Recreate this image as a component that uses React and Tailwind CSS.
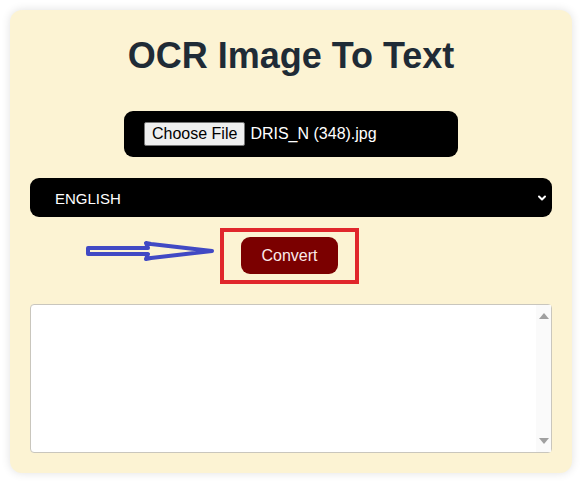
import { ChevronDown } from 'lucide-react';

export default function App() {
    return (
        <div className="bg-white p-[10px] h-[482px] font-['Liberation_Sans',Arial,sans-serif]">
            <div className="relative bg-[#fcf3d3] rounded-[12px] shadow-[0_0_10px_rgba(0,0,0,0.12)] px-[20px] pt-[26px] pb-[20px] flex flex-col">
                {/* title */}
                <h1 className="text-center text-[36px] leading-[40px] font-bold text-[#1f2b36]">
                    OCR Image To Text
                </h1>

                {/* file picker */}
                <div className="mt-[35px] self-center w-[334px] h-[46px] bg-black rounded-[9px] flex items-center pl-[20px]">
                    <span className="h-[24px] px-[7px] flex items-center bg-[#efefef] border border-[#767676] rounded-[2px] text-[16px] text-black">
                        Choose File
                    </span>
                    <span className="ml-[5px] text-[16px] text-white">DRIS_N (348).jpg</span>
                </div>

                {/* language select */}
                <div className="mt-[21px] h-[39px] bg-black rounded-[9px] flex items-center justify-between pl-[25px] pr-[4px]">
                    <span className="pt-[4px] text-[15px] text-white">ENGLISH</span>
                    <ChevronDown size={12} strokeWidth={4} className="text-white" />
                </div>

                {/* convert */}
                <div className="relative mt-[11px] flex justify-center pr-[3px]">
                    <div className="relative">
                        <svg className="absolute left-[-134px] top-[10px]" width="130" height="26" viewBox="0 0 130 26">
                            <path
                                d="M2 10 L62 10 L60 5 L65 6 L126 13 L65 20 L60 21 L62 16 L2 16 Z"
                                fill="none"
                                stroke="#4149c4"
                                strokeWidth="4"
                                strokeLinejoin="round"
                            />
                        </svg>
                        <div className="border-[4px] border-[#e0262b] px-[17px] pt-[5px] pb-[6px]">
                            <button className="w-[97px] h-[37px] bg-[#7b0000] rounded-[9px] text-[#fbeaea] text-[16px]">
                                Convert
                            </button>
                        </div>
                    </div>
                </div>

                {/* output */}
                <div className="mt-[20px] h-[149px] bg-white border border-[#c9c6bd] rounded-[4px] flex justify-end">
                    <div className="w-[15px] bg-[#fafafa] flex flex-col items-center justify-between py-[8px]">
                        <svg width="10" height="6" viewBox="0 0 10 6"><path d="M0 6 L5 0 L10 6 Z" fill="#a0a0a0" /></svg>
                        <svg width="10" height="6" viewBox="0 0 10 6"><path d="M0 0 L5 6 L10 0 Z" fill="#a0a0a0" /></svg>
                    </div>
                </div>
            </div>
        </div>
    );
}
